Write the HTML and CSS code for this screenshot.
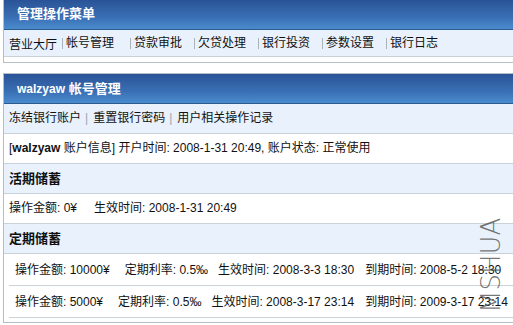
FILE: index.html
```html
<!DOCTYPE html>
<html>

<head>
	<meta charset="utf-8">
	<meta name="viewport" content="width=device-width, initial-scale=1.0">
	<title>帐号管理</title>
	<link rel="stylesheet" href="styles.css">
</head>

<body>
	<div class="box box-menu">
		<div class="box-head">管理操作菜单</div>
		<div class="menu">
			<a href="#">营业大厅</a>
			<a href="#">帐号管理</a>
			<a href="#">贷款审批</a>
			<a href="#">欠贷处理</a>
			<a href="#">银行投资</a>
			<a href="#">参数设置</a>
			<a href="#">银行日志</a>
		</div>
	</div>

	<div class="box">
		<div class="box-head"><span class="user">walzyaw</span> 帐号管理</div>
		<div class="row light"><a href="#">冻结银行账户</a><span class="sep">|</span><a href="#">重置银行密码</a><span class="sep">|</span><a href="#">用户相关操作记录</a></div>
		<div class="row">[<b>walzyaw</b> 账户信息] 开户时间: 2008-1-31 20:49, 账户状态: 正常使用</div>
		<div class="row light title">活期储蓄</div>
		<div class="row"><span class="f1">操作金额: 0¥</span>生效时间: 2008-1-31 20:49</div>
		<div class="row light title">定期储蓄</div>
		<div class="sub">
			<div class="sub-row"><span class="f1">操作金额: 10000¥</span><span class="f2">定期利率: 0.5‰</span><span class="f3">生效时间: 2008-3-3 18:30</span>到期时间: 2008-5-2 18:30</div>
			<div class="sub-row"><span class="f1">操作金额: 5000¥</span><span class="f2">定期利率: 0.5‰</span><span class="f3">生效时间: 2008-3-17 23:14</span>到期时间: 2009-3-17 23:14</div>
		</div>
	</div>

	<div class="mark">MSHUA</div>
</body>

</html>
```

FILE: styles.css
```css
* {
	margin: 0;
	padding: 0;
	box-sizing: border-box;
}

body {
	width: 100%;
	height: 100vh;
	overflow: hidden;
	background: #fff;
	font-family: Arial, "Liberation Sans", "Noto Sans CJK SC", sans-serif;
	font-size: 12px;
	color: #111;
	position: relative;
}

a {
	color: #111;
	text-decoration: none;
}

.box {
	width: 540px;
	margin-left: 3px;
	border: 1px solid #b4bec6;
	border-right: 0;
}

.box-menu {
	border-top: 0;
	padding-bottom: 5px;
	margin-bottom: 10px;
}

.box-head {
	height: 30px;
	line-height: 29px;
	padding-left: 13px;
	color: #fff;
	font-weight: bold;
	font-size: 13px;
	background: linear-gradient(#2a5397, #3a6fb4 60%, #4a8bcd);
	border-bottom: 1px solid #2d5a8c;
}

.box-menu .box-head {
	height: 30px;
	line-height: 28px;
}

.user {
	font-size: 12px;
}

.menu {
	height: 27px;
	display: flex;
	align-items: center;
	padding-left: 5px;
	background: #e9f2fc;
	border-bottom: 1px solid #c9d2d9;
	font-size: 12px;
}

.menu a {
	padding-right: 12px;
}

.menu a:first-child {
	padding-right: 5px;
}

.menu a:nth-child(2) {
	padding-right: 16px;
}

.menu a + a {
	border-left: 1px solid #aab4bc;
	padding-left: 3px;
	line-height: 11px;
}

.row {
	height: 30px;
	line-height: 29px;
	padding-left: 5px;
	border-bottom: 1px solid #c9d2d9;
	white-space: nowrap;
}

.light {
	background: #e9f2fc;
}

.title {
	font-weight: bold;
	font-size: 13px;
}

.sep {
	color: #9aa4ac;
	margin: 0 5px 0 4px;
}

.f1 {
	margin-right: 17px;
}

.sub {
	padding: 0 0 4px 5px;
}

.sub-row {
	height: 32px;
	line-height: 33px;
	padding-left: 6px;
	border-bottom: 1px solid #c9d2d9;
	white-space: nowrap;
}

.sub-row .f1 {
	margin-right: 15px;
}

.f2 {
	margin-right: 10px;
}

.f3 {
	margin-right: 11px;
}

.mark {
	position: absolute;
	left: 478px;
	top: 313px;
	font-family: "DejaVu Sans", sans-serif;
	font-weight: 200;
	font-size: 26px;
	color: rgba(80, 80, 80, 0.8);
	transform: rotate(-90deg);
	transform-origin: left top;
	line-height: 1;
}
```
